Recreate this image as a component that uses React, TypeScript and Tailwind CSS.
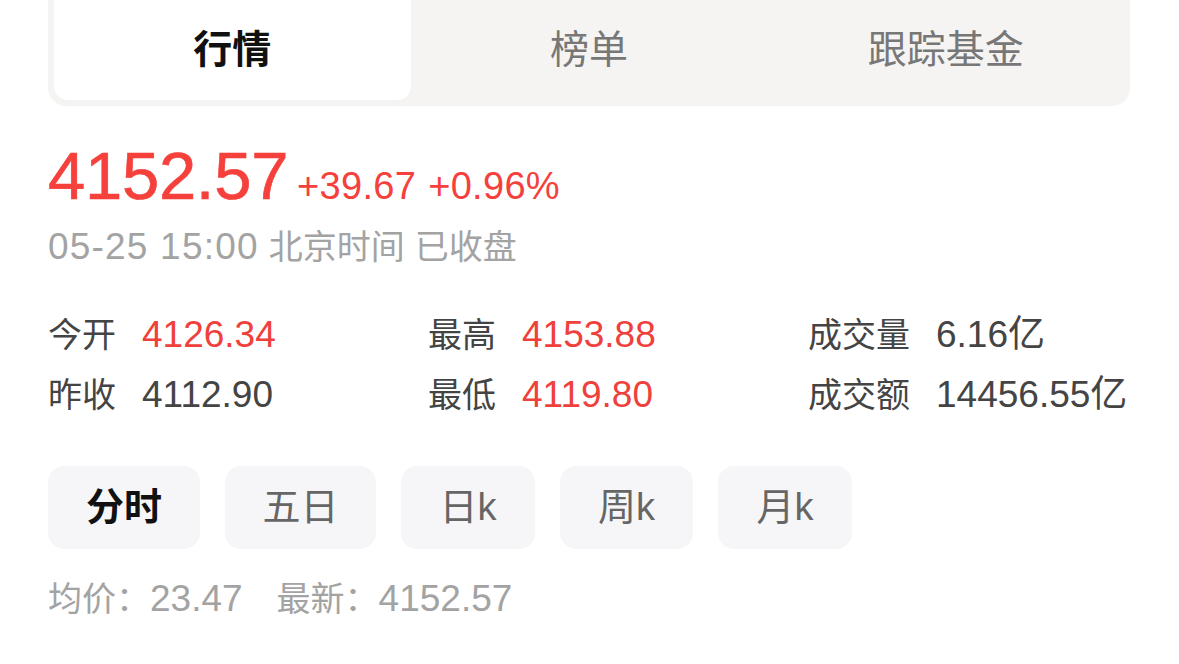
import React from 'react';

const tabs = ['行情', '榜单', '跟踪基金'];

const stats = [
  [
    { label: '今开', value: '4126.34', red: true },
    { label: '昨收', value: '4112.90', red: false },
  ],
  [
    { label: '最高', value: '4153.88', red: true },
    { label: '最低', value: '4119.80', red: true },
  ],
  [
    { label: '成交量', value: '6.16亿', red: false },
    { label: '成交额', value: '14456.55亿', red: false },
  ],
];

const periods = [
  { name: '分时', w: 'w-[152px]' },
  { name: '五日', w: 'w-[151px]' },
  { name: '日k', w: 'w-[134px]' },
  { name: '周k', w: 'w-[133px]' },
  { name: '月k', w: 'w-[134px]' },
];

export default function App() {
  return (
    <div
      className="w-[1179px] h-[664px] overflow-hidden bg-white px-[48px]"
      style={{ fontFamily: '"Liberation Sans", "Noto Sans CJK SC", sans-serif' }}
    >
      {/* top tabs */}
      <div className="flex h-[106px] rounded-b-[18px] bg-[#f5f4f2] px-[6px] pb-[6px] w-[1082px]">
        {tabs.map((t, i) => (
          <div
            key={t}
            className={`flex-1 flex items-center justify-center text-[39px] ${
              i === 0 ? 'bg-white rounded-b-[14px] text-[#111] font-bold' : 'text-[#777]'
            }`}
          >
            {t}
          </div>
        ))}
      </div>

      {/* price */}
      <div className="mt-[32px] flex items-baseline text-[#f5403c]">
        <span className="text-[67px] leading-[76px] tracking-[-0.3px] [-webkit-text-stroke:0.6px_#f5403c]">4152.57</span>
        <span className="ml-[9px] text-[38px] tracking-[0.3px]">+39.67</span>
        <span className="ml-[12px] text-[38px] tracking-[0.3px]">+0.96%</span>
      </div>
      <div className="mt-[10px] flex items-baseline gap-[10px] leading-[44px] text-[#a3a3a3]">
        <span className="text-[37px] tracking-[1.2px]">05-25 15:00</span>
        <span className="text-[34px]">北京时间</span>
        <span className="text-[34px]">已收盘</span>
      </div>

      {/* stats */}
      <div className="mt-[38px] grid grid-cols-[380px_380px_1fr] gap-y-[16px]">
        {[0, 1].map((row) =>
          stats.map((col, c) => {
            const s = col[row];
            return (
              <div key={`${row}-${c}`} className="flex items-baseline gap-[26px] h-[44px] whitespace-nowrap">
                <span className="text-[34px] text-[#444]">{s.label}</span>
                <span className={`text-[37px] ${s.red ? 'text-[#f0403c]' : 'text-[#444]'}`}>{s.value}</span>
              </div>
            );
          })
        )}
      </div>

      {/* period buttons */}
      <div className="mt-[55px] flex gap-[25px]">
        {periods.map((p, i) => (
          <div
            key={p.name}
            className={`${p.w} h-[83px] rounded-[16px] bg-[#f6f6f8] flex items-center justify-center text-[38px] ${
              i === 0 ? 'text-[#111] font-bold' : 'text-[#666]'
            }`}
          >
            {p.name}
          </div>
        ))}
      </div>

      <div className="mt-[28px] flex items-baseline leading-[44px] text-[#a3a3a3]">
        <span className="text-[34px]">均价：</span>
        <span className="text-[37px]">23.47</span>
        <span className="ml-[34px] text-[34px]">最新：</span>
        <span className="text-[37px]">4152.57</span>
      </div>
    </div>
  );
}
